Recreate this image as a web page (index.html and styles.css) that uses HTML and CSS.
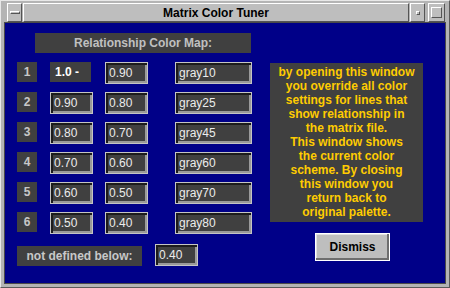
FILE: index.html
```html
<!DOCTYPE html>
<html>
<head>
<meta charset="utf-8">
<link rel="stylesheet" href="styles.css">
</head>
<body>
<div class="window">
  <div class="titlebar">
    <div class="tbtn btn-menu"><span class="bar"></span></div>
    <div class="tbtn title">Matrix Color Tuner</div>
    <div class="tbtn btn-icon"><span class="dot"></span></div>
    <div class="tbtn btn-max"><span class="sq"></span></div>
  </div>
  <div class="content">
    <div class="header">Relationship Color Map:</div>
    <div class="main">
      <div class="left">
        <div class="row">
          <div class="num">1</div>
          <div class="top-val">1.0 -</div>
          <div class="field hi">0.90</div>
          <div class="field name">gray10</div>
        </div>
        <div class="row">
          <div class="num">2</div>
          <div class="field lo">0.90</div>
          <div class="field hi">0.80</div>
          <div class="field name">gray25</div>
        </div>
        <div class="row">
          <div class="num">3</div>
          <div class="field lo">0.80</div>
          <div class="field hi">0.70</div>
          <div class="field name">gray45</div>
        </div>
        <div class="row">
          <div class="num">4</div>
          <div class="field lo">0.70</div>
          <div class="field hi">0.60</div>
          <div class="field name">gray60</div>
        </div>
        <div class="row">
          <div class="num">5</div>
          <div class="field lo">0.60</div>
          <div class="field hi">0.50</div>
          <div class="field name">gray70</div>
        </div>
        <div class="row">
          <div class="num">6</div>
          <div class="field lo">0.50</div>
          <div class="field hi">0.40</div>
          <div class="field name">gray80</div>
        </div>
        <div class="below">
          <div class="below-label">not defined below:</div>
          <div class="field below-field">0.40</div>
        </div>
      </div>
      <div class="right">
        <div class="info">by opening this window<br>you override all color<br>settings for lines that<br>show relationship in<br>the matrix file.<br>This window shows<br>the current color<br>scheme. By closing<br>this window you<br>return back to<br>original palette.</div>
        <div class="dismiss">Dismiss</div>
      </div>
    </div>
  </div>
</div>
</body>
</html>
```

FILE: styles.css
```css
html, body {
  margin: 0;
  padding: 0;
}
body {
  width: 450px;
  height: 288px;
  overflow: hidden;
  background: #b4b4b4;
  font-family: "Liberation Sans", Arial, sans-serif;
  font-size: 12px;
}
.window {
  width: 450px;
  height: 288px;
  box-sizing: border-box;
  border: 1px solid #5a5a5a;
  border-top-color: #e8e8e8;
  border-left-color: #e8e8e8;
  padding: 2px 4px 4px 4px;
  display: flex;
  flex-direction: column;
  background: #b4b4b4;
}
.titlebar {
  display: flex;
  height: 19px;
  margin-bottom: 1px;
}
.tbtn {
  box-sizing: border-box;
  height: 19px;
  background: #bebebe;
  border: 1px solid;
  border-color: #ffffff #555555 #555555 #ffffff;
  display: flex;
  align-items: center;
  justify-content: center;
}
.btn-menu {
  width: 15px;
  margin-left: 2px;
}
.btn-menu .bar {
  width: 10px;
  height: 3px;
  box-sizing: border-box;
  border: 1px solid;
  border-color: #ffffff #555555 #555555 #ffffff;
}
.title {
  flex: 1;
  margin-left: 1px;
  font-weight: bold;
  font-size: 12px;
  color: #000000;
}
.btn-icon {
  width: 15px;
  margin-left: 1px;
}
.btn-icon .dot {
  width: 4px;
  height: 4px;
  box-sizing: border-box;
  border: 1px solid;
  border-color: #ffffff #555555 #555555 #ffffff;
}
.btn-max {
  width: 17px;
  margin-left: 3px;
}
.btn-max .sq {
  width: 11px;
  height: 11px;
  box-sizing: border-box;
  border: 1px solid;
  border-color: #ffffff #555555 #555555 #ffffff;
}
.content {
  height: 260px;
  box-sizing: border-box;
  background: #000088;
  box-shadow: 0 0 0 1px #4a4a4a;
  padding: 10px 0 0 12px;
}
.header {
  margin-left: 18px;
  width: 216px;
  height: 20px;
  line-height: 20px;
  background: #404040;
  color: #c0c0c0;
  font-weight: bold;
  text-align: center;
}
.main {
  display: flex;
  margin-top: 9px;
}
.left {
  width: 235px;
  display: flex;
  flex-direction: column;
  gap: 8px;
}
.row {
  display: flex;
  align-items: flex-start;
  height: 22px;
}
.num {
  width: 20px;
  height: 20px;
  line-height: 20px;
  margin-right: 13px;
  background: #404040;
  color: #c8c8c8;
  font-weight: bold;
  text-align: center;
}
.top-val {
  width: 41px;
  height: 20px;
  line-height: 20px;
  margin-right: 14px;
  box-sizing: border-box;
  padding-left: 5px;
  background: #404040;
  color: #ffffff;
  font-weight: bold;
}
.field {
  box-sizing: border-box;
  height: 22px;
  line-height: 20px;
  background: #404040;
  color: #ececec;
  border: 1px solid #c4c4c4;
  box-shadow: inset 2px 2px 0 #1c1c1c, inset -2px -2px 0 #9a9a9a;
  padding-left: 3px;
}
.lo {
  width: 43px;
  margin-right: 12px;
}
.hi {
  width: 43px;
  margin-right: 27px;
}
.name {
  width: 77px;
}
.below {
  display: flex;
  align-items: flex-start;
  margin-top: 2px;
}
.below-label {
  width: 125px;
  height: 20px;
  line-height: 20px;
  margin-top: 2px;
  background: #404040;
  color: #c8c8c8;
  font-weight: bold;
  text-align: center;
}
.below-field {
  width: 43px;
  margin-left: 13px;
}
.right {
  margin-left: 18px;
  margin-top: 1px;
  display: flex;
  flex-direction: column;
}
.info {
  width: 153px;
  height: 159px;
  box-sizing: border-box;
  padding-top: 2px;
  background: #404040;
  color: #ffcc00;
  font-weight: bold;
  line-height: 14px;
  text-align: center;
}
.dismiss {
  margin-top: 11px;
  margin-left: 45px;
  width: 75px;
  height: 28px;
  box-sizing: border-box;
  background: #bebebe;
  border: 1px solid #ffffff;
  box-shadow: inset -2px -2px 0 #6e6e6e, inset 1px 1px 0 #e0e0e0;
  color: #000000;
  font-weight: bold;
  display: flex;
  align-items: center;
  justify-content: center;
}
```
